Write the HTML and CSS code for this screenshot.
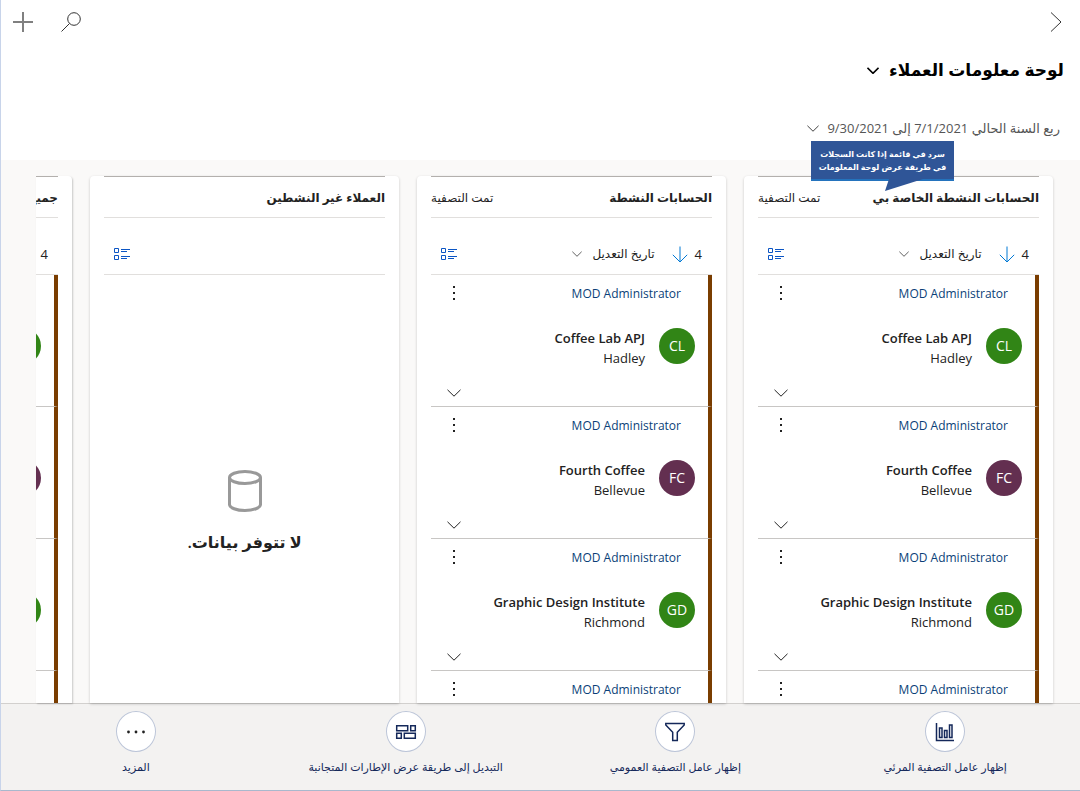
FILE: index.html
```
<!DOCTYPE html>
<html lang="ar" dir="rtl">
<head>
<meta charset="utf-8">
<meta name="viewport" content="width=device-width, initial-scale=1">
<title>لوحة معلومات العملاء</title>
<link rel="stylesheet" href="styles.css">
</head>
<body>
<svg class="defs" aria-hidden="true">
  <symbol id="chev" viewBox="0 0 14 8"><path d="M.5 .8 7 7.2 13.500 .8"/></symbol>
  <symbol id="arrow" viewBox="0 0 16 17"><path d="M8 .5V16M.8 8.800 8 16l7.200-7.200"/></symbol>
  <symbol id="list" viewBox="0 0 16 12"><path d="M.5 .5h4v4h-4zM.5 7.500h4v4h-4zM7 1.500h9M7 3.500h6M7 8.500h9M7 10.500h6"/></symbol>
  <symbol id="dots" viewBox="0 0 2 14"><path d="M0 0h2v2H0zM0 6h2v2H0zM0 12h2v2H0z"/></symbol>
</svg>
<header class="topbar">
  <button class="icon-btn" aria-label="رجوع"><svg class="icon back" viewBox="0 0 12 20"><path d="M1 .5 11 10 1 19.500"/></svg></button>
  <div class="actions">
    <button class="icon-btn" aria-label="بحث"><svg class="icon search" viewBox="0 0 20 20"><circle cx="13" cy="7" r="6.300"/><path d="M8.500 11.500.5 19.500"/></svg></button>
    <button class="icon-btn" aria-label="جديد"><svg class="icon plus" viewBox="0 0 20 20"><path d="M10 0v20M0 10h20"/></svg></button>
  </div>
</header>
<div class="heading">
  <h1><button class="title-btn">لوحة معلومات العملاء <svg class="icon title-chev"><use href="#chev"/></svg></button></h1>
  <button class="period">ربع السنة الحالي 7/1/2021 إلى 9/30/2021 <svg class="icon period-chev"><use href="#chev"/></svg></button>
</div>
<main class="board">
  <div class="track">
    <section class="stream">
      <div class="callout" role="tooltip">سرد في قائمة إذا كانت السجلات<br>في طريقة عرض لوحة المعلومات<svg class="tail" viewBox="0 0 38 12"><path d="M4 0h34L0 12z"/></svg></div>
      <div class="stream-head"><h2>الحسابات النشطة الخاصة بي</h2><span>تمت التصفية</span></div>
      <div class="tools"><span class="count">4</span><button aria-label="ترتيب تنازلي"><svg class="icon arrow"><use href="#arrow"/></svg></button><button class="sort">تاريخ التعديل <svg class="icon sort-chev"><use href="#chev"/></svg></button><button class="view" aria-label="طريقة العرض"><svg class="icon list"><use href="#list"/></svg></button></div>
      <ul class="records">
        <li class="record"><div class="row"><a href="#">MOD Administrator</a><button class="more" aria-label="المزيد"><svg class="icon dots"><use href="#dots"/></svg></button></div><div class="person"><span class="avatar green">CL</span><div dir="ltr"><h3>Coffee Lab APJ</h3><p>Hadley</p></div></div><button class="expand" aria-label="توسيع"><svg class="icon"><use href="#chev"/></svg></button></li>
        <li class="record"><div class="row"><a href="#">MOD Administrator</a><button class="more" aria-label="المزيد"><svg class="icon dots"><use href="#dots"/></svg></button></div><div class="person"><span class="avatar plum">FC</span><div dir="ltr"><h3>Fourth Coffee</h3><p>Bellevue</p></div></div><button class="expand" aria-label="توسيع"><svg class="icon"><use href="#chev"/></svg></button></li>
        <li class="record"><div class="row"><a href="#">MOD Administrator</a><button class="more" aria-label="المزيد"><svg class="icon dots"><use href="#dots"/></svg></button></div><div class="person"><span class="avatar green">GD</span><div dir="ltr"><h3>Graphic Design Institute</h3><p>Richmond</p></div></div><button class="expand" aria-label="توسيع"><svg class="icon"><use href="#chev"/></svg></button></li>
        <li class="record"><div class="row"><a href="#">MOD Administrator</a><button class="more" aria-label="المزيد"><svg class="icon dots"><use href="#dots"/></svg></button></div></li>
      </ul>
    </section>
    <section class="stream">
      <div class="stream-head"><h2>الحسابات النشطة</h2><span>تمت التصفية</span></div>
      <div class="tools"><span class="count">4</span><button aria-label="ترتيب تنازلي"><svg class="icon arrow"><use href="#arrow"/></svg></button><button class="sort">تاريخ التعديل <svg class="icon sort-chev"><use href="#chev"/></svg></button><button class="view" aria-label="طريقة العرض"><svg class="icon list"><use href="#list"/></svg></button></div>
      <ul class="records">
        <li class="record"><div class="row"><a href="#">MOD Administrator</a><button class="more" aria-label="المزيد"><svg class="icon dots"><use href="#dots"/></svg></button></div><div class="person"><span class="avatar green">CL</span><div dir="ltr"><h3>Coffee Lab APJ</h3><p>Hadley</p></div></div><button class="expand" aria-label="توسيع"><svg class="icon"><use href="#chev"/></svg></button></li>
        <li class="record"><div class="row"><a href="#">MOD Administrator</a><button class="more" aria-label="المزيد"><svg class="icon dots"><use href="#dots"/></svg></button></div><div class="person"><span class="avatar plum">FC</span><div dir="ltr"><h3>Fourth Coffee</h3><p>Bellevue</p></div></div><button class="expand" aria-label="توسيع"><svg class="icon"><use href="#chev"/></svg></button></li>
        <li class="record"><div class="row"><a href="#">MOD Administrator</a><button class="more" aria-label="المزيد"><svg class="icon dots"><use href="#dots"/></svg></button></div><div class="person"><span class="avatar green">GD</span><div dir="ltr"><h3>Graphic Design Institute</h3><p>Richmond</p></div></div><button class="expand" aria-label="توسيع"><svg class="icon"><use href="#chev"/></svg></button></li>
        <li class="record"><div class="row"><a href="#">MOD Administrator</a><button class="more" aria-label="المزيد"><svg class="icon dots"><use href="#dots"/></svg></button></div></li>
      </ul>
    </section>
    <section class="stream">
      <div class="stream-head"><h2>العملاء غير النشطين</h2></div>
      <div class="tools"><button class="view" aria-label="طريقة العرض"><svg class="icon list"><use href="#list"/></svg></button></div>
      <div class="empty">
        <svg class="icon cylinder" viewBox="0 0 34 42"><ellipse cx="17" cy="7.500" rx="15.500" ry="6"/><path d="M1.500 7.500v27c0 3.300 7 6 15.500 6s15.500-2.700 15.500-6v-27"/></svg>
        <p>لا تتوفر بيانات.</p>
      </div>
    </section>
    <section class="stream partial">
      <div class="stream-head"><h2>جميع</h2></div>
      <div class="tools"><span class="count">4</span></div>
      <ul class="records">
        <li class="record"><div class="row"></div><div class="person"><span class="avatar green"></span></div></li>
        <li class="record"><div class="row"></div><div class="person"><span class="avatar plum"></span></div></li>
        <li class="record"><div class="row"></div><div class="person"><span class="avatar green"></span></div></li>
        <li class="record"></li>
      </ul>
    </section>
  </div>
</main>
<footer class="commands">
  <button class="command"><span class="disc"><svg class="icon" viewBox="0 0 20 20"><path d="M1.500 1v17.500H19M4.500 6h2.500v9.500H4.500zM9.500 8.500H12v7H9.500zM14.500 3H17v12.500h-2.500z"/></svg></span>إظهار عامل التصفية المرئي</button>
  <button class="command"><span class="disc"><svg class="icon" viewBox="0 0 20 20"><path d="M.8 1.500h18.400V3L12.300 10.200v8.300H7.700v-8.300L.8 3z"/></svg></span>إظهار عامل التصفية العمومي</button>
  <button class="command"><span class="disc"><svg class="icon" viewBox="0 0 20 20"><path d="M.7 3.700h11v5H.7zM14.700 3.700h4.600v5h-4.600zM.7 11.300h4.600v5H.7zM8.300 11.300h11v5h-11z"/></svg></span>التبديل إلى طريقة عرض الإطارات المتجانبة</button>
  <button class="command"><span class="disc"><svg class="icon ellipsis" viewBox="0 0 20 20"><circle cx="2.500" cy="10" r="1.400"/><circle cx="10" cy="10" r="1.400"/><circle cx="17.500" cy="10" r="1.400"/></svg></span>المزيد</button>
</footer>
</body>
</html>
```
FILE: styles.css
```
* { box-sizing: border-box; margin: 0; padding: 0; }
body {
  display: flex;
  flex-direction: column;
  height: 100vh;
  overflow: hidden;
  border-left: 1px solid #c8d4ea;
  border-bottom: 1px solid #a9b8cd;
  background: #fff;
  color: #222;
  font: 13px/20px "Open Sans", "Noto Sans", "DejaVu Sans", sans-serif;
}
button { border: 0; background: none; color: inherit; font: inherit; cursor: pointer; }
a { color: #0b3f78; text-decoration: none; }
ul { list-style: none; }
.defs { display: none; }
.icon { display: block; fill: none; stroke: currentColor; overflow: visible; }
.topbar { display: flex; justify-content: space-between; align-items: center; height: 44px; padding: 0 18px 0 12px; }
.icon-btn { display: flex; color: #333; }
.actions { display: flex; gap: 28px; }
.back { width: 12px; height: 20px; }
.search, .plus { width: 20px; height: 20px; }
.plus { color: #808080; stroke-width: 2; }
.heading { display: flex; flex-direction: column; align-items: flex-start; height: 116px; padding: 10px 16px 0; }
h1 { font-size: 17px; line-height: 32px; font-weight: 600; color: #000; }
.title-btn, .period, .sort { display: flex; align-items: center; gap: 10px; }
.title-chev { width: 12px; height: 7px; stroke-width: 2; }
.period { margin: 32px 4px 0 0; gap: 8px; color: #555; font-size: 13px; }
.period-chev { width: 12px; height: 7px; color: #222; }
.board { flex: 1; min-height: 0; padding: 16px 27px 0 35px; background: #faf9f8; }
.track { display: flex; gap: 18px; height: 100%; }
.stream {
  position: relative;
  display: flex;
  flex-direction: column;
  flex: 0 0 309px;
  padding: 0 14px;
  border-radius: 4px 4px 0 0;
  background: #fff;
  box-shadow: 0 1px 3px rgba(0, 0, 0, .2);
}
.partial { flex: 1 1 0; min-width: 0; max-width: 309px; overflow: hidden; padding-left: 0; border-radius: 0 4px 0 0; box-shadow: 1px 1px 2px rgba(0, 0, 0, .2); }
.stream-head { display: flex; justify-content: space-between; align-items: center; flex: none; height: 42px; padding-top: 1px; border-top: 1px solid #b3b0ad; border-bottom: 1px solid #e1dfdd; white-space: nowrap; }
h2 { font-size: 12px; line-height: 20px; font-weight: 600; }
.stream-head span { font-size: 12px; }
.tools { display: flex; align-items: center; flex: none; height: 57px; padding: 16px 10px 0; border-bottom: 1px solid #e1dfdd; }
.count { margin-left: 14px; }
.tools .count { margin-left: 7px; }
.arrow { width: 16px; height: 17px; color: #0078d4; }
.sort { margin-right: 17px; font-size: 12px; }
.sort-chev { width: 10px; height: 6px; }
.view { margin-right: auto; color: #0b55c4; }
.list { width: 16px; height: 12px; }
.records { flex: 1; min-height: 0; overflow: hidden; }
.record { display: flex; flex-direction: column; height: 132px; padding: 9px 13px 0 16px; border-right: 4px solid #7a3d00; border-bottom: 1px solid #c8c6c4; }
.row { display: flex; justify-content: space-between; height: 20px; padding: 0 14px 0 6px; font-size: 12px; }
.more { height: 18px; }
.dots { width: 2px; height: 14px; fill: #222; stroke: none; }
.person { display: flex; align-items: flex-start; gap: 14px; height: 40px; margin-top: 24px; text-align: right; }
.person p { font-size: 13px; }
h3 { font-size: 13px; line-height: 20px; font-weight: 600; }
.avatar { display: flex; align-items: center; justify-content: center; flex: none; width: 36px; height: 36px; border-radius: 50%; color: #fff; font-size: 14px; }
.green { background: #318516; }
.plum { background: #632f50; }
.expand { align-self: flex-end; margin-top: 21px; }
.expand .icon { width: 14px; height: 8px; }
.empty { display: flex; flex-direction: column; align-items: center; gap: 18px; padding-top: 195px; font-size: 16px; line-height: 24px; font-weight: 600; }
.cylinder { width: 34px; height: 42px; color: #999; stroke-width: 3; }
.callout { position: absolute; top: -35px; left: 67px; z-index: 2; width: 143px; height: 40px; padding-top: 6px; border-bottom: 2px solid #2473bd; background: #2f5597; color: #fff; font-size: 8px; line-height: 13px; font-weight: 700; text-align: center; white-space: nowrap; }
.tail { position: absolute; top: 38px; left: 74px; width: 38px; height: 12px; fill: #2f5597; }
.commands { display: grid; grid-template-columns: repeat(4, 1fr); flex: none; height: 87px; padding-top: 7px; border-top: 1px solid #d2d0ce; background: #f3f2f1; }
.command { display: flex; flex-direction: column; align-items: center; gap: 5px; color: #14285a; font-size: 11px; }
.disc { display: flex; align-items: center; justify-content: center; width: 40px; height: 41px; border: 1px solid #bcc5d8; border-radius: 50%; background: #fff; }
.disc .icon { width: 20px; height: 20px; stroke-width: 1.5; }
.disc .ellipsis { fill: #222; stroke: none; }
```
